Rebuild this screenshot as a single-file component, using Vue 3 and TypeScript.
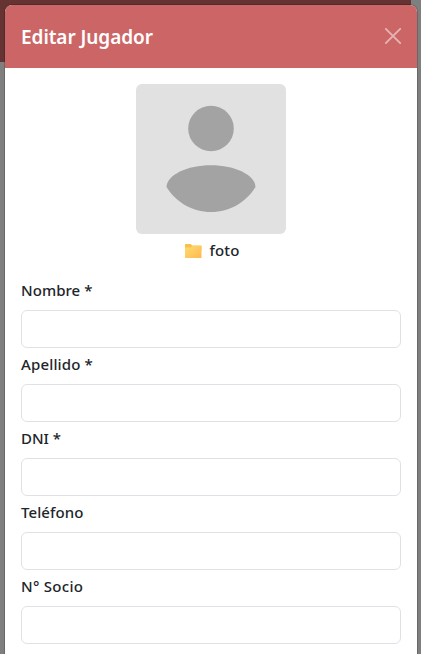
<script setup lang="ts">
import { reactive } from 'vue'

interface Field {
  id: string
  label: string
  tracking: string
}

const fields: Field[] = [
  { id: 'nombre', label: 'Nombre *', tracking: '0.05px' },
  { id: 'apellido', label: 'Apellido *', tracking: '0.15px' },
  { id: 'dni', label: 'DNI *', tracking: '0px' },
  { id: 'telefono', label: 'Teléfono', tracking: '0.1px' },
  { id: 'socio', label: 'N° Socio', tracking: '0.28px' },
]

const values = reactive<Record<string, string>>({
  nombre: '',
  apellido: '',
  dni: '',
  telefono: '',
  socio: '',
})
</script>

<template>
  <div class="page">
    <section class="modal" role="dialog" aria-labelledby="title">
      <header class="header">
        <h5 id="title" class="title">Editar Jugador</h5>
        <button class="close" type="button">
          <svg width="16" height="16" viewBox="0 0 16 16">
            <path d="M.8 .8L15.2 15.2M15.2 .8L.8 15.2" fill="none" stroke="#fff" stroke-width="1.9" stroke-linecap="round" />
          </svg>
        </button>
      </header>
      <div class="body">
        <div class="photo">
          <svg class="avatar" width="150" height="150" viewBox="0 0 150 150">
            <rect width="150" height="150" rx="6" fill="#e1e1e1" />
            <circle cx="75" cy="44.5" r="22.8" fill="#a3a3a3" />
            <path d="M30.5 103C31 91 51 81.300 75 81.300S119 91 119.500 103C110 118 94 128 75 128S40 118 30.500 103Z" fill="#a3a3a3" />
          </svg>
          <label class="upload">
            <svg width="17" height="14" viewBox="0 0 17 14">
              <defs>
                <linearGradient id="folder" x1="0" y1="0" x2="1" y2="1">
                  <stop offset="0" stop-color="#ffdc70" />
                  <stop offset="1" stop-color="#ffb84e" />
                </linearGradient>
              </defs>
              <path d="M0 .6Q0 0 .6 0H5.500L7.500 1.500H16Q16.500 1.500 16.500 2V6H0Z" fill="#f9c04a" />
              <path d="M0 3.500H5.800L7.500 2H16Q16.500 2 16.500 2.500V13.400Q16.500 14 16 14H.6Q0 14 0 13.400Z" fill="url(#folder)" />
            </svg>
            <span class="upload-text">foto</span>
          </label>
        </div>
        <form class="form">
          <div v-for="f in fields" :key="f.id" class="field">
            <label class="label" :for="f.id" :style="{ letterSpacing: f.tracking }">{{ f.label }}</label>
            <input :id="f.id" v-model="values[f.id]" class="input" type="text" />
          </div>
        </form>
      </div>
    </section>
  </div>
</template>

<style>
body {
  overflow: hidden;
}
</style>

<style scoped>
.page {
  box-sizing: border-box;
  width: 421px;
  height: 654px;
  padding: 4px 3px 0;
  overflow: hidden;
  font-family: "Noto Sans", sans-serif;
  color: #212529;
  background: linear-gradient(#663333, #663333) 0 0 / 411px 62px no-repeat, #7f7f7f;
}
.modal {
  box-sizing: border-box;
  width: 414px;
  height: 700px;
  margin-left: 1px;
  border: 1px solid rgba(0, 0, 0, 0.18);
  border-radius: 8px;
  background: #fff;
  background-clip: padding-box;
}
.header {
  display: flex;
  align-items: center;
  justify-content: space-between;
  box-sizing: border-box;
  height: 63px;
  padding: 0 16px 1px;
  border-radius: 7px 7px 0 0;
  background: #cc6666;
}
.title {
  margin: 1px 0 0;
  font-size: 19px;
  font-weight: 600;
  letter-spacing: -0.06px;
  line-height: 30px;
  color: #fff;
}
.close {
  display: flex;
  padding: 0;
  border: 0;
  background: none;
  opacity: 0.5;
}
.body {
  padding: 16px;
}
.photo {
  display: flex;
  flex-direction: column;
  align-items: center;
}
.upload {
  display: flex;
  align-items: center;
  gap: 7px;
  height: 24px;
  margin: 5px 0 0 3px;
  font-size: 15px;
  font-weight: 500;
  letter-spacing: 0.2px;
  line-height: 24px;
}
.upload-text {
  height: 26px;
}
.form {
  margin-top: 15px;
}
.field {
  display: flex;
  flex-direction: column;
  gap: 8px;
  margin-bottom: 4px;
}
.label {
  height: 24px;
  font-size: 15px;
  font-weight: 500;
  line-height: 24px;
}
.input {
  box-sizing: border-box;
  width: 100%;
  height: 38px;
  padding: 6px 12px;
  border: 1px solid #dee2e6;
  border-radius: 6px;
  outline: 0;
  background: #fff;
  font: inherit;
}
</style>
